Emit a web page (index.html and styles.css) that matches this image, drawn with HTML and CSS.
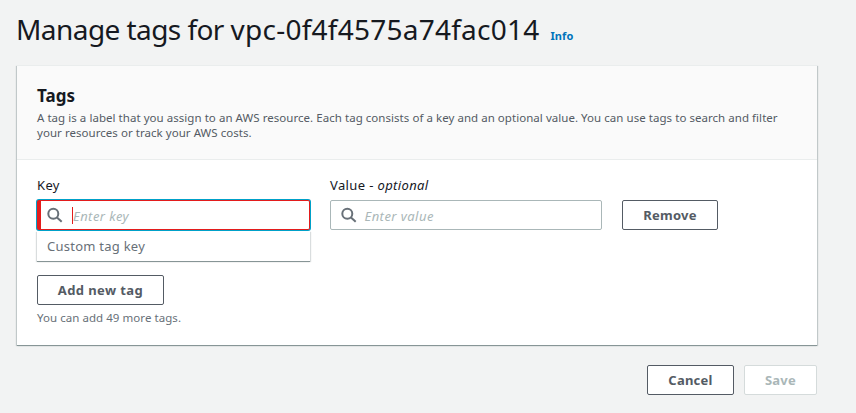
FILE: index.html
```html
<!DOCTYPE html>
<html lang="en">
<head>
<meta charset="utf-8">
<title>Manage tags</title>
<link rel="stylesheet" href="styles.css">
</head>
<body>
<header class="page-header">
<h1>Manage tags for <span class="resource-id">vpc-0f4f4575a74fac014</span></h1>
<a class="info">Info</a>
</header>
<main class="panel">
<div class="panel-header">
<h2>Tags</h2>
<p>A tag is a label that you assign to an AWS resource. Each tag consists of a key and an optional value. You can use tags to search and filter<br>your resources or track your AWS costs.</p>
</div>
<div class="panel-body">
<div class="row">
<div class="field key-field">
<label>Key</label>
<div class="input invalid">
<svg class="search" viewBox="0 0 16 16"><circle cx="6.3" cy="6.8" r="5"/><path d="M10 10.5 14.7 14.8"/></svg>
<span class="caret"></span><span class="placeholder">Enter key</span>
</div>
<div class="dropdown">Custom tag key</div>
</div>
<div class="field value-field">
<label>Value - <em>optional</em></label>
<div class="input">
<svg class="search" viewBox="0 0 16 16"><circle cx="6.3" cy="6.8" r="5"/><path d="M10 10.5 14.7 14.8"/></svg>
<span class="placeholder">Enter value</span>
</div>
</div>
<button class="button remove">Remove</button>
</div>
<button class="button add">Add new tag</button>
<p class="hint">You can add 49 more tags.</p>
</div>
</main>
<footer class="actions">
<button class="button cancel">Cancel</button>
<button class="button save" disabled>Save</button>
</footer>
</body>
</html>
```
FILE: styles.css
```css
* { box-sizing: border-box; }
body {
  margin: 0;
  padding: 9px 39px 0 17px;
  height: 413px;
  overflow: hidden;
  background: #f2f3f3;
  color: #16191f;
  font: 13px/20px "Noto Sans", sans-serif;
}
h1, h2, p { margin: 0; }
.page-header { display: flex; align-items: baseline; gap: 11px; height: 56px; white-space: nowrap; }
h1 { margin-left: -1px; font-size: 28px; line-height: 40px; font-weight: 400; letter-spacing: -.56px; }
.resource-id { letter-spacing: .24px; }
.info { color: #0073bb; font-size: 11px; font-weight: 700; letter-spacing: .1px; }
.panel {
  height: 280px;
  background: #fff;
  border-top: 1px solid #eaeded;
  box-shadow: 0 1px 0 0 #879596, 1px 1px 1px 0 rgba(0, 28, 36, .2), -1px 1px 1px 0 rgba(0, 28, 36, .2);
}
.panel-header { height: 94px; padding: 18px 20px 0; background: #fafafa; border-bottom: 1px solid #eaeded; }
h2 { font-size: 17px; line-height: 24px; font-weight: 700; }
.panel-header p { color: #545b64; font-size: 11.5px; line-height: 15px; margin-top: 2px; white-space: nowrap; letter-spacing: .044px; }
.panel-body { padding: 16px 20px 0; }
.row { display: flex; height: 99px; }
.field { width: 272px; }
.key-field { width: 273px; margin-right: 20px; }
label { display: block; height: 24px; line-height: 19px; letter-spacing: .37px; }
.input { display: flex; align-items: center; height: 30px; padding-left: 10px; border: 1px solid #aab7b8; border-radius: 2px; background: #fff; }
.invalid { padding-left: 6px; border: 1px solid #e31c1c; border-left-width: 4px; box-shadow: 0 0 0 1px #00a1c9; }
.search { width: 16px; height: 16px; margin-right: 8px; fill: none; stroke: #687078; stroke-width: 2; }
.invalid .search { margin-right: 9px; }
.value-field .search { margin-left: -.5px; }
.placeholder { padding-top: 2px; color: #aab7b8; font-style: italic; letter-spacing: .45px; }
.caret { width: 1px; height: 17px; background: #e31c1c; }
.dropdown { height: 30px; margin-top: 1px; padding: 5px 10px; color: #687078; background: #fff; letter-spacing: .25px; box-shadow: 0 1px 0 #879596, 1px 1px 1px rgba(0, 28, 36, .15), -1px 1px 1px rgba(0, 28, 36, .15); }
.button { height: 30px; padding: 0; border: 1px solid #545b64; border-radius: 2px; background: #fff; color: #545b64; font: 700 13px/20px "Noto Sans", sans-serif; letter-spacing: .25px; }
.remove { width: 96px; margin: 24px 0 0 20px; }
.add { display: block; width: 127px; letter-spacing: .4px; }
.hint { color: #687078; font-size: 11.5px; line-height: 16px; margin-top: 5px; letter-spacing: .05px; }
.actions { display: flex; justify-content: flex-end; gap: 10px; margin-top: 20px; }
.cancel { width: 87px; }
.save { width: 73px; border-color: #d5dbdb; color: #aab7b8; }
```
